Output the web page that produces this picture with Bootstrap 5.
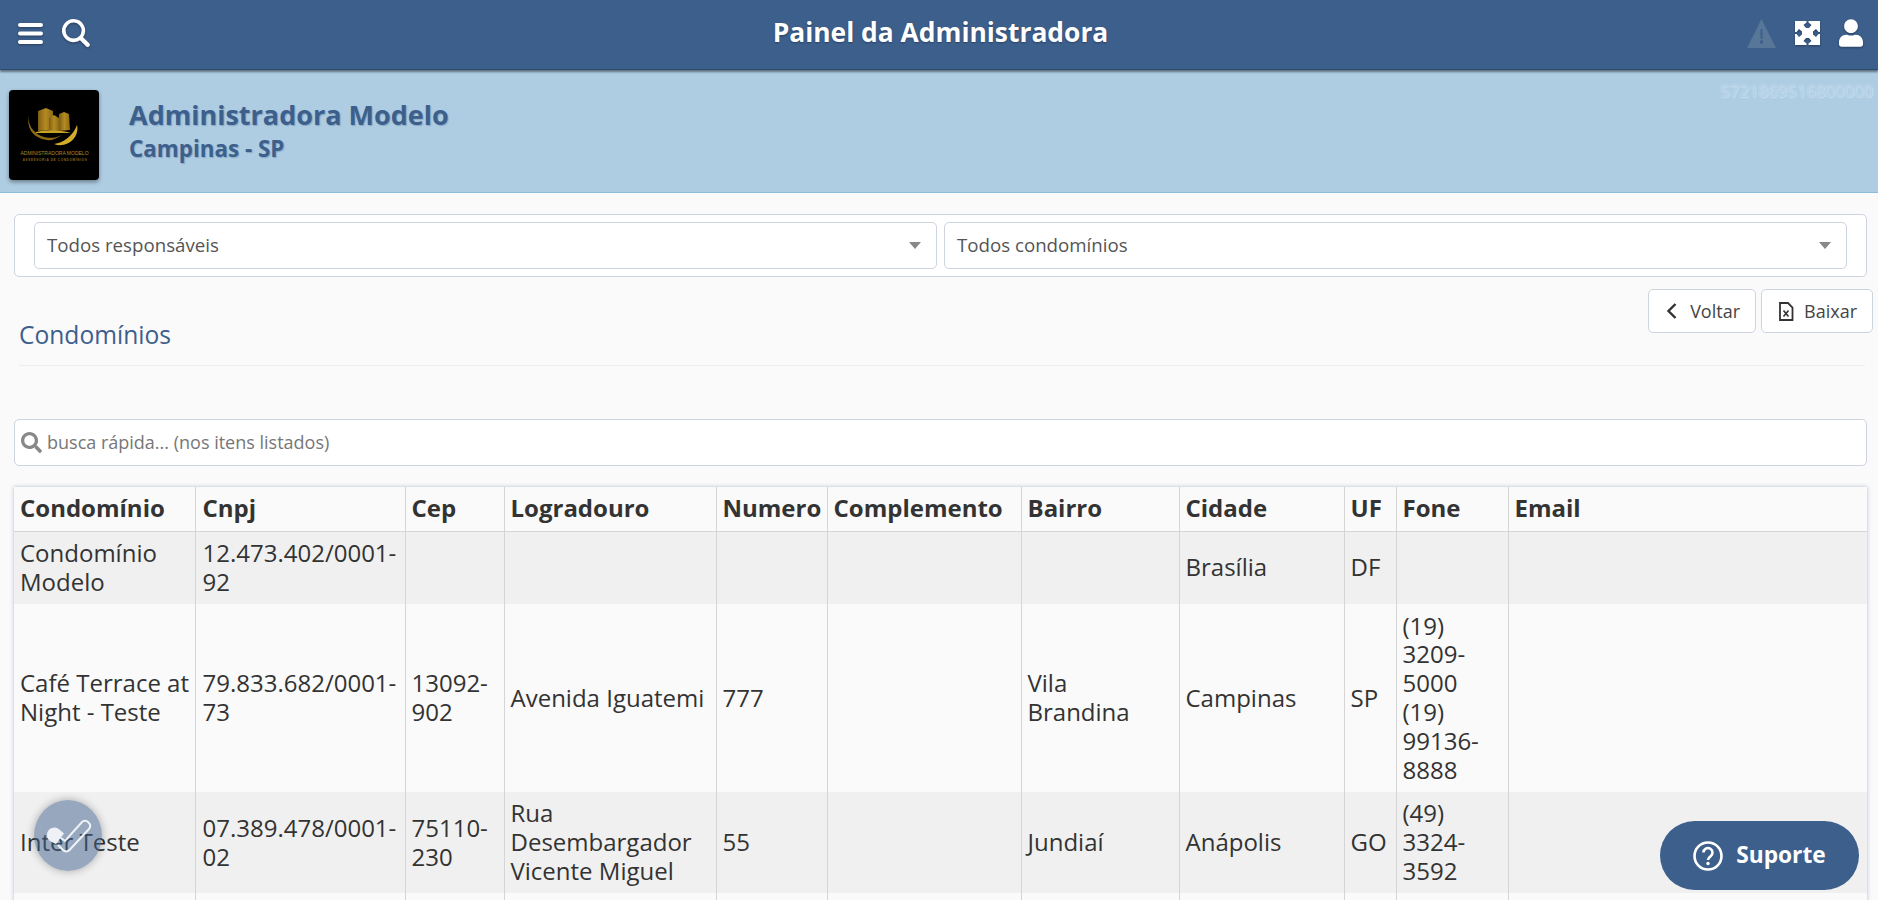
<!DOCTYPE html>
<html lang="pt-BR">
<head>
    <meta charset="UTF-8">
    <meta name="viewport" content="width=device-width, initial-scale=1.0">
    <title>Painel da Administradora</title>
    <link href="https://cdn.jsdelivr.net/npm/bootstrap@5.3.0/dist/css/bootstrap.min.css" rel="stylesheet">
    <style>
        html, body { height: 100%; overflow: hidden; }
        body { font-family: "Open Sans", "Liberation Sans", sans-serif; background: #fafafa; color: #333; }

        /* topo */
        .topo { height: 70px; background: #3d5f8c; padding: 0 15px 3px 18px; border-bottom: 1px solid #2f4a70; box-shadow: 0 2px 2px rgba(0,0,0,.45); position: relative; z-index: 2; }
        .topo-titulo { font-size: 26.4px; font-weight: 700; color: #fff; text-shadow: 0 1px 2px rgba(0,0,0,.3); }
        .topo-lado { width: 240px; gap: 19px; }
        .topo svg { display: block; fill: #fff; filter: drop-shadow(0 1px 1px rgba(0,0,0,.35)); }
        .topo .alerta { fill: #587698; filter: none; }

        /* faixa da administradora */
        .faixa { height: 123px; background: #aecde3; border-bottom: 1px solid #8dbbdc; padding: 20px 0 0 9px; position: relative; }
        .logo-box { width: 90px; height: 90px; background: #000; border-radius: 4px; box-shadow: 0 2px 4px rgba(0,0,0,.4); }
        .faixa-nome { margin-left: 30px; padding-top: 7px; color: #3d5f8c; font-weight: 700; text-shadow: 1px 1px 1px rgba(61,95,140,.35); }
        .faixa-nome h1 { font-size: 27px; line-height: 35px; margin: 0 0 1px; font-weight: 700; }
        .faixa-nome h2 { font-size: 22.4px; line-height: 31px; margin: 0; font-weight: 700; }
        .faixa-codigo { position: absolute; top: 8px; right: 5px; font-size: 16.7px; color: #b2d0e6; text-shadow: 0 0 2px #cfe2f0, 1px 1px 1px #c4dcec; }

        /* filtros */
        .filtros { margin: 21px 11px 0 14px; height: 63px; padding: 7px 19px; gap: 7px; background: #fff; border: 1px solid #ced4de; border-radius: 5px; }
        .filtro { flex: 1; height: 47px; padding: 0 12px; background: #fff; border: 1px solid #ced4de; border-radius: 5px; font-size: 18.7px; color: #555; }
        .filtro-seta { width: 0; height: 0; border-left: 6px solid transparent; border-right: 6px solid transparent; border-top: 7px solid #888; margin-right: 3px; }

        /* cabecalho da lista */
        .lista-topo { margin: 12px 5px 0 19px; height: 91px; position: relative; }
        .lista-titulo { color: #3d5f8c; font-size: 24.6px; font-weight: 400; margin: 0; padding-top: 29px; line-height: 33px; }
        .lista-linha { border-bottom: 1px solid #eee; margin-top: 14px; margin-right: 8px; }
        .botoes { position: absolute; top: 0; right: 0; gap: 5px; }
        .btn-claro { height: 44px; background: #fff; border: 1px solid #ced4de; border-radius: 5px; font-size: 18px; color: #444; padding: 0 15px 0 16px; gap: 10px; }
        .btn-claro svg { display: block; }

        /* busca */
        .busca { margin: 39px 11px 0 14px; height: 47px; padding: 0 6px; gap: 5px; background: #fff; border: 1px solid #ced4de; border-radius: 5px; font-size: 18px; color: #777; }
        .busca svg { fill: #888; display: block; }

        /* tabela */
        .tabela-box { margin: 21px 11px 0 14px; box-shadow: 0 0 4px rgba(90,110,150,.45); }
        .tabela { table-layout: fixed; width: 1853px; font-size: 24px; color: #333; margin: 0; border-collapse: collapse; }
        .tabela th, .tabela td { border: 1px solid #d5d5d5; border-width: 0 1px; padding: 0 6px; vertical-align: middle; line-height: 28.8px; background: transparent; }
        .tabela th:first-child, .tabela td:first-child { border-left: 0; padding-right: 2px; }
        .tabela th:nth-child(2), .tabela td:nth-child(2) { padding-left: 7px; }
        .tabela th:last-child, .tabela td:last-child { border-right: 0; }
        .tabela th { height: 44px; font-weight: 700; background: #fafafa; border-bottom: 1px solid #d5d5d5; white-space: nowrap; }
        .tabela tbody tr { background: #fafafa; }
        .tabela tbody tr:nth-child(odd) { background: #f0f0f0; }
        .tabela td { padding-top: 7.5px; padding-bottom: 7.5px; }
        .c1 { width: 181px; } .c2 { width: 210px; } .c3 { width: 99px; } .c4 { width: 212px; }
        .c5 { width: 111px; } .c6 { width: 194px; } .c7 { width: 158px; } .c8 { width: 165px; }
        .c9 { width: 52px; } .c10 { width: 112px; } .c11 { width: 359px; }

        /* flutuantes */
        .flutua-check { position: fixed; left: 34px; top: 800px; width: 68px; height: 71px; border-radius: 50%; background: rgba(61,95,140,.5); box-shadow: 0 0 8px rgba(0,0,0,.3); z-index: 5; }
        .flutua-suporte { position: fixed; left: 1660px; top: 821px; width: 199px; height: 69px; border-radius: 35px; background: #3d5f8c; color: #fff; font-size: 22.7px; font-weight: 700; gap: 13px; z-index: 5; }
    </style>
</head>
<body>
    <!-- Barra superior -->
    <nav class="topo d-flex align-items-center justify-content-between">
        <div class="topo-lado d-flex align-items-center">
            <svg width="25" height="21" viewBox="0 0 25 21"><rect width="25" height="4" rx="2"/><rect y="8.5" width="25" height="4" rx="2"/><rect y="17" width="25" height="4" rx="2"/></svg>
            <svg width="28" height="28" viewBox="0 0 29 29"><path d="M12 0a12 12 0 1 0 6.6 22l6.3 6.3a2.2 2.2 0 0 0 3.2-3.2l-6.3-6.3A12 12 0 0 0 12 0zm0 3.7a8.3 8.3 0 1 1 0 16.6 8.3 8.3 0 0 1 0-16.6z"/></svg>
        </div>
        <div class="topo-titulo">Painel da Administradora</div>
        <div class="topo-lado d-flex align-items-center justify-content-end">
            <svg class="alerta" width="29" height="29" viewBox="0 0 29 29"><path d="M14.5 0 L29 29 H0 Z"/><rect x="13.6" y="10" width="1.8" height="10" fill="#3d5f8c"/><circle cx="14.5" cy="23" r="1.8" fill="#3d5f8c"/></svg>
            <svg width="25" height="24" viewBox="0 0 25 24"><path fill-rule="evenodd" d="M0 0h25v24H0z M11.5 0h2v1.500l3 2.500-2.500 3h-3L8.500 4l3-2.500z M11.5 24h2v-1.500l3-2.500-2.500-3h-3l-2.500 3 3 2.500z M0 11h0v2h1.500L4 16l3-2.500v-3L4 8 1.500 11z M25 11v2h-1.500L21 16l-3-2.500v-3L21 8l2.500 3z"/></svg>
            <svg width="24" height="28" viewBox="0 0 448 512"><path d="M224 256c70.700 0 128-57.300 128-128S294.700 0 224 0 96 57.300 96 128s57.300 128 128 128zm89.600 32h-16.700c-22.200 10.200-46.900 16-72.900 16s-50.600-5.800-72.900-16h-16.700C60.200 288 0 348.200 0 422.400V464c0 26.500 21.500 48 48 48h352c26.500 0 48-21.500 48-48v-41.600c0-74.200-60.200-134.400-134.400-134.400z"/></svg>
        </div>
    </nav>

    <!-- Administradora -->
    <section class="faixa d-flex align-items-start">
        <div class="logo-box flex-shrink-0">
            <svg width="90" height="90" viewBox="0 0 90 90">
                <defs>
                    <linearGradient id="ouro" x1="0" y1="0" x2="1" y2="0"><stop offset="0" stop-color="#7d5e12"/><stop offset=".5" stop-color="#b58a22"/><stop offset="1" stop-color="#8a6a18"/></linearGradient>
                </defs>
                <path d="M29 41V21l8-3 7 3v19z" fill="url(#ouro)"/>
                <path d="M40 41V28l5-3 5 3v13z" fill="url(#ouro)"/>
                <path d="M50 41V24l5-2 5 2 1 16z" fill="url(#ouro)"/>
                <path d="M27 42c10-2 24-2 35 1H27z" fill="#c9a227"/>
                <path d="M20 25c-3 15 15 29 33 20-6 4-11 6-15 5C24 48 17 38 20 25z" fill="#8d6a14"/>
                <path d="M68 35c3 13-11 24-23 19 9-1 19-8 23-19z" fill="#d4ac2b"/>
                <text x="45.5" y="65" text-anchor="middle" font-size="5" fill="#b08a2a" font-family="Liberation Sans, sans-serif">ADMINISTRADORA MODELO</text>
                <text x="46" y="71" text-anchor="middle" font-size="3" letter-spacing=".7" font-weight="700" fill="#8d6a14" font-family="Liberation Sans, sans-serif">ASSESSORIA DE CONDOMÍNIOS</text>
            </svg>
        </div>
        <div class="faixa-nome">
            <h1>Administradora Modelo</h1>
            <h2>Campinas - SP</h2>
        </div>
        <div class="faixa-codigo">5721869516800000</div>
    </section>

    <!-- Filtros -->
    <div class="filtros d-flex">
        <div class="filtro d-flex align-items-center justify-content-between"><span>Todos responsáveis</span><span class="filtro-seta"></span></div>
        <div class="filtro d-flex align-items-center justify-content-between"><span>Todos condomínios</span><span class="filtro-seta"></span></div>
    </div>

    <!-- Titulo da lista -->
    <div class="lista-topo">
        <h3 class="lista-titulo">Condomínios</h3>
        <div class="lista-linha"></div>
        <div class="botoes d-flex">
            <button class="btn-claro d-flex align-items-center" type="button">
                <svg width="15" height="18" viewBox="0 0 15 18"><path d="M10.5 2 3.5 9l7 7" fill="none" stroke="#333" stroke-width="2.4"/></svg>
                Voltar
            </button>
            <button class="btn-claro d-flex align-items-center" type="button">
                <svg width="16" height="19" viewBox="0 0 16 19"><path d="M2 1h8l4.500 4.500V18H2z" fill="none" stroke="#333" stroke-width="1.8"/><path d="M5.500 8.500l5 6M10.500 8.500l-5 6" stroke="#333" stroke-width="1.6"/></svg>
                Baixar
            </button>
        </div>
    </div>

    <!-- Busca -->
    <div class="busca d-flex align-items-center">
        <svg width="21" height="21" viewBox="0 0 512 512"><path d="M505 442.700L405.300 343c-4.500-4.500-10.600-7-17-7H372c27.600-35.300 44-79.700 44-128C416 93.100 322.900 0 208 0S0 93.100 0 208s93.100 208 208 208c48.300 0 92.700-16.400 128-44v16.300c0 6.400 2.500 12.500 7 17l99.700 99.700c9.400 9.400 24.600 9.400 33.900 0l28.300-28.300c9.400-9.400 9.400-24.600.1-34zM208 336c-70.700 0-128-57.200-128-128 0-70.700 57.200-128 128-128 70.700 0 128 57.200 128 128 0 70.700-57.200 128-128 128z"/></svg>
        <span>busca rápida... (nos itens listados)</span>
    </div>

    <!-- Tabela -->
    <div class="tabela-box">
        <table class="tabela">
            <colgroup>
                <col class="c1"><col class="c2"><col class="c3"><col class="c4"><col class="c5"><col class="c6"><col class="c7"><col class="c8"><col class="c9"><col class="c10"><col class="c11">
            </colgroup>
            <thead>
                <tr><th>Condomínio</th><th>Cnpj</th><th>Cep</th><th>Logradouro</th><th>Numero</th><th>Complemento</th><th>Bairro</th><th>Cidade</th><th>UF</th><th>Fone</th><th>Email</th></tr>
            </thead>
            <tbody>
                <tr><td>Condomínio Modelo</td><td>12.473.402/0001-92</td><td></td><td></td><td></td><td></td><td></td><td>Brasília</td><td>DF</td><td></td><td></td></tr>
                <tr><td>Café Terrace at Night - Teste</td><td>79.833.682/0001-73</td><td>13092-902</td><td>Avenida Iguatemi</td><td>777</td><td></td><td>Vila Brandina</td><td>Campinas</td><td>SP</td><td>(19) 3209-5000 (19) 99136-8888</td><td></td></tr>
                <tr><td>Inter Teste</td><td>07.389.478/0001-02</td><td>75110-230</td><td>Rua Desembargador Vicente Miguel</td><td>55</td><td></td><td>Jundiaí</td><td>Anápolis</td><td>GO</td><td>(49) 3324-3592</td><td></td></tr>
                <tr><td>&nbsp;</td><td></td><td></td><td></td><td></td><td></td><td></td><td></td><td></td><td></td><td></td></tr>
            </tbody>
        </table>
    </div>

    <!-- Botoes flutuantes -->
    <div class="flutua-check d-flex align-items-center justify-content-center">
        <svg width="48" height="40" viewBox="0 0 48 40"><path d="M3 19a7.500 7.500 0 0 1 13-5l4 3.500-8 10.500-6-3a7 7 0 0 1-3-6z" fill="#eef2f6"/><path d="M14 29l5 5a4.500 4.500 0 0 0 6.500 0L45 13a5 5 0 0 0-7-7L21 25l-4-3" fill="none" stroke="#eef2f6" stroke-width="2"/></svg>
    </div>
    <div class="flutua-suporte d-flex align-items-center justify-content-center">
        <svg width="30" height="30" viewBox="0 0 30 30"><circle cx="15" cy="15" r="13.5" fill="none" stroke="#fff" stroke-width="2.6"/><path d="M10.500 11.500a4.500 4.500 0 1 1 7 3.800c-1.500 1-2.500 1.700-2.500 3.700" fill="none" stroke="#fff" stroke-width="2.6"/><circle cx="15" cy="22.5" r="1.7" fill="#fff"/></svg>
        <span>Suporte</span>
    </div>

    <script src="https://cdn.jsdelivr.net/npm/bootstrap@5.3.0/dist/js/bootstrap.bundle.min.js"></script>
</body>
</html>
